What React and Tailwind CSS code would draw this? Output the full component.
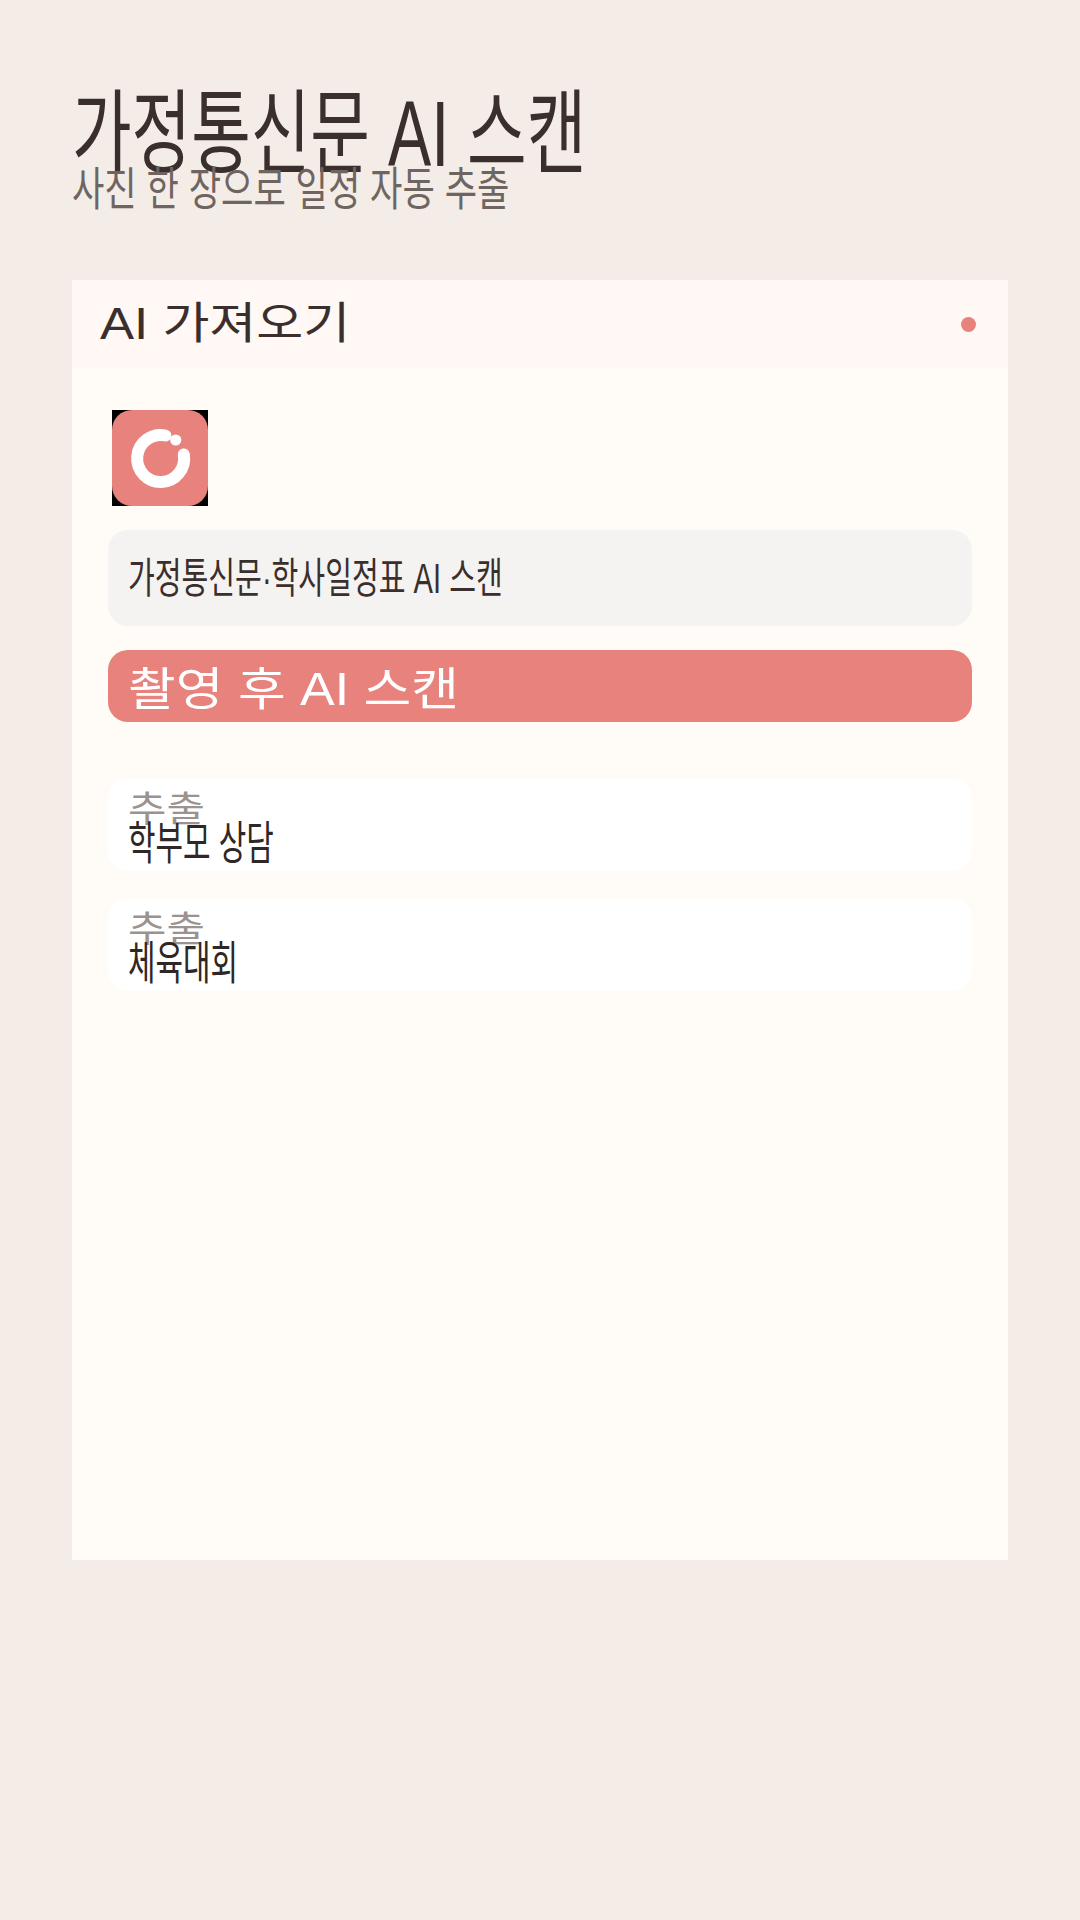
import React from "react";

const fontStack = "font-['Liberation_Sans','Noto_Sans_CJK_KR',sans-serif]";

const extracted = ["학부모 상담", "체육대회"];

const AppMark = () => (
  <svg width="96" height="96" viewBox="0 0 96 96" className="block">
    <rect width="96" height="96" fill="#000" />
    <rect width="96" height="96" rx="20" fill="#E8827C" />
    <path
      d="M 53.5 25.5 A 23.5 23.5 0 1 0 71.8 44.5"
      fill="none"
      stroke="#fff"
      strokeWidth="12"
      strokeLinecap="round"
    />
    <circle cx="63.7" cy="30" r="5.6" fill="#fff" />
  </svg>
);

export default function App() {
  return (
    <div className={`min-h-[1920px] w-[1080px] bg-[#F3ECE7] px-[72px] pt-[72px] ${fontStack}`}>
      {/* Heading */}
      <div className="h-[208px]">
        <h1 className="h-[90px] origin-top-left scale-x-[0.704] whitespace-nowrap text-[92px] leading-[124px] font-normal text-[#3A2F2D]">
          가정통신문 AI 스캔
        </h1>
        <p className="h-[50px] origin-top-left scale-x-[0.765] whitespace-nowrap text-[46px] leading-[54px] text-[#6F6560]">
          사진 한 장으로 일정 자동 추출
        </p>
      </div>

      {/* Card */}
      <div className="h-[1280px] w-[936px] bg-[#FFFCF8]">
        <div className="flex h-[88px] items-center justify-between bg-[#FFF8F5] pr-[32px] pl-[28px]">
          <span className="origin-left scale-x-[1.16] text-[44px] leading-[84px] text-[#3A2F2D]">AI 가져오기</span>
          <span className="h-[15px] w-[15px] rounded-full bg-[#E8827C]" />
        </div>

        <div className="flex flex-col px-[36px] pt-[42px]">
          <div className="pl-[4px]">
            <AppMark />
          </div>

          <div className="mt-[24px] flex h-[96px] items-center rounded-[20px] bg-[#F5F3F1] px-[20px]">
            <span className="origin-left scale-x-[0.693] whitespace-nowrap text-[42px] text-[#3A2F2D]">
              가정통신문·학사일정표 AI 스캔
            </span>
          </div>

          <div className="mt-[24px] flex h-[72px] items-center rounded-[20px] bg-[#E8827C] px-[20px]">
            <span className="origin-left scale-x-[1.128] whitespace-nowrap pt-[6px] text-[46px] leading-[72px] text-white">
              촬영 후 AI 스캔
            </span>
          </div>

          <div className="mt-[57px] flex flex-col gap-[28px]">
            {extracted.map((title) => (
              <div key={title} className="h-[92px] rounded-[20px] bg-white px-[20px]">
                <p className="h-[30px] origin-left scale-x-[1.16] pt-[11px] text-[36px] leading-[40px] text-[#9A9390]">추출</p>
                <p className="origin-left scale-x-[0.65] whitespace-nowrap pt-[8px] text-[46px] leading-[52px] text-[#2F2725]">
                  {title}
                </p>
              </div>
            ))}
          </div>
        </div>
      </div>
    </div>
  );
}
